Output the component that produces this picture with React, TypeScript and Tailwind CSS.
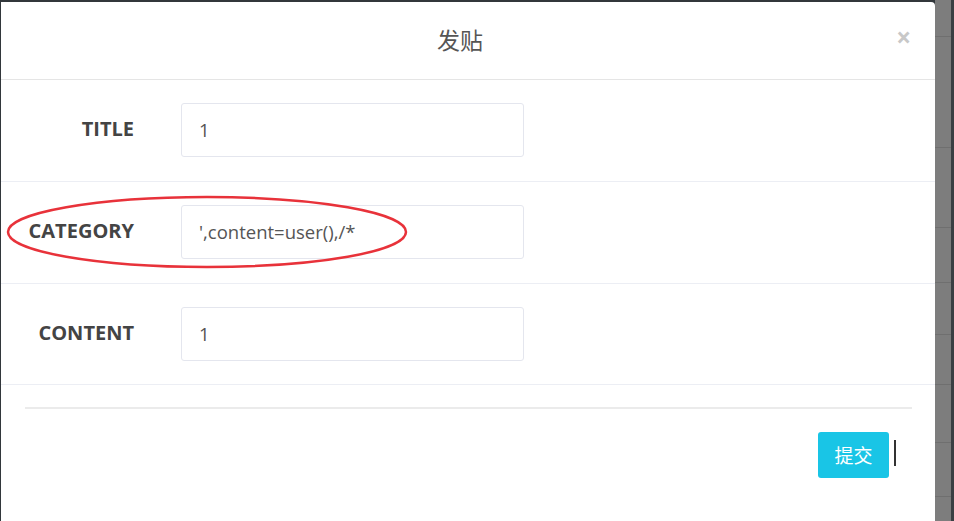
const fields = [
  {label: 'TITLE', value: '1', h: 'h-[102px]'},
  {label: 'CATEGORY', value: "',content=user(),/*", h: 'h-[102px]'},
  {label: 'CONTENT', value: '1', h: 'h-[101px]'},
];

const bgLines = [37, 111, 80, 55, 52, 50, 58, 54];

export default function App() {
  return (
    <div className="relative flex w-[954px] h-[521px] overflow-hidden bg-[#32373b] font-['Open_Sans','Noto_Sans_CJK_SC',sans-serif]">
      <div className="w-[1px] shrink-0" />
      <div className="mt-[2px] w-[934px] shrink-0 flex flex-col bg-white rounded-tr-[4px]">
        {/* header */}
        <div className="relative h-[78px] shrink-0 flex items-center justify-center pr-[16px] border-b border-[#e5e5e5]">
          <span className="text-[23px] text-[#555] font-['Noto_Sans_CJK_SC',sans-serif] -mt-[2px]">发贴</span>
          <span className="absolute right-[24px] top-[22px] text-[26px] font-bold leading-none text-[#c8c8c8]">×</span>
        </div>
        {/* form rows */}
        {fields.map((f) => (
          <div key={f.label} className={`${f.h} shrink-0 flex items-center border-b border-[#eceef4]`}>
            <div className="w-[133px] -mt-[3px] pl-[2px] text-right text-[20px] font-bold text-[#444]">{f.label}</div>
            <div className="ml-[47px] -mt-[1px] w-[343px] h-[54px] flex items-center pl-[17px] border border-[#e4e6ee] rounded-[3px] text-[18.5px] text-[#555]">
              {f.value}
            </div>
          </div>
        ))}
        {/* footer */}
        <div className="pt-[22px] px-[24px]">
          <div className="h-[2px] bg-[#ebebeb] w-[887px]" />
          <div className="flex justify-end items-center mt-[23px] pr-[22px]">
            <button className="w-[71px] h-[46px] rounded-[3px] bg-[#19c5e6] text-white text-[19px] font-['Noto_Sans_CJK_SC',sans-serif]">
              提交
            </button>
          </div>
        </div>
      </div>
      <div className="w-[16px] shrink-0 flex flex-col bg-[#7d7d7d]">
        {bgLines.map((h, i) => (
          <div key={i} className="shrink-0 border-b border-[#6f6f6f]" style={{height: h}} />
        ))}
      </div>
      <div className="flex-1 bg-[#3a3f43]" />

      {/* text cursor */}
      <div className="absolute left-[894px] top-[440px] w-[2px] h-[26px] bg-[#333]" />

      {/* red annotation ellipse */}
      <svg className="absolute left-0 top-0 pointer-events-none" width="954" height="521">
        <ellipse cx="207" cy="232" rx="199" ry="35" fill="none" stroke="#e8323a" strokeWidth="2.5" />
      </svg>
    </div>
  );
}
